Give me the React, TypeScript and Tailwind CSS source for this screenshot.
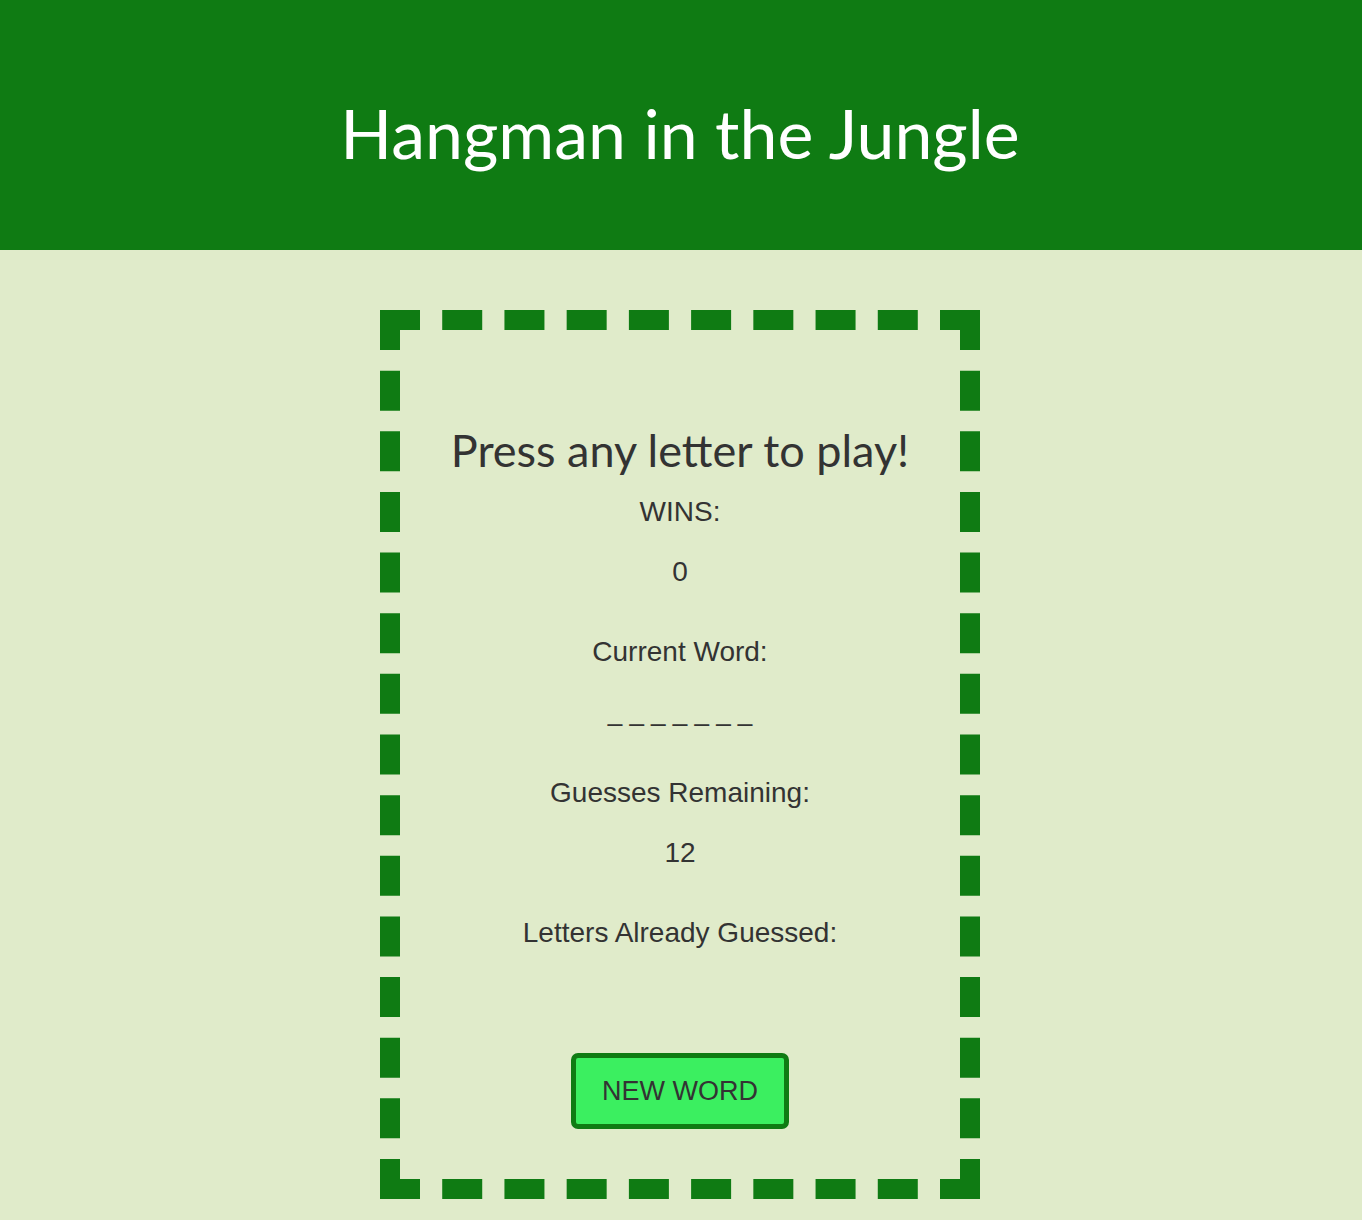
import React from 'react';

export default function App() {
  const wins = 0;
  const guessesLeft = 12;
  const word = '_ _ _ _ _ _ _';

  return (
    <div className="min-h-[1220px] bg-[#e0ebca] pb-[22px] text-[#333333]" style={{ fontFamily: '"Liberation Sans", Arial, sans-serif' }}>
      <header className="flex h-[250px] items-center justify-center bg-[#0f7b13] pt-[16px] pr-[2px]">
        <h1 className="text-[68px] leading-none text-white" style={{ fontFamily: 'Lato, "Open Sans", sans-serif' }}>
          Hangman in the Jungle
        </h1>
      </header>

      <main className="pr-[2px]">
        <div className="mx-auto mt-[60px] flex w-[600px] flex-col items-center border-[20px] border-dashed border-[#0f7b13] pt-[90px] pb-[50px]">
          <h2 className="h-[60px] text-[45px] leading-[60px]" style={{ fontFamily: 'Lato, "Open Sans", sans-serif' }}>
            Press any letter to play!
          </h2>

          <p className="mt-[2px] h-[60px] text-[28px] leading-[60px]">WINS:</p>
          <p className="h-[60px] text-[28px] leading-[60px]">{wins}</p>

          <p className="mt-[20px] h-[60px] text-[28px] leading-[60px]">Current Word:</p>
          <p className="h-[60px] text-[26px] leading-[60px] whitespace-pre">{word}</p>

          <p className="mt-[21px] h-[60px] text-[28px] leading-[60px]">Guesses Remaining:</p>
          <p className="h-[60px] text-[28px] leading-[60px]">{guessesLeft}</p>

          <p className="mt-[20px] h-[60px] text-[28px] leading-[60px]">Letters Already Guessed:</p>

          <button className="mt-[90px] h-[76px] w-[218px] rounded-[7px] border-[5px] border-[#0f7b13] bg-[#3bef60] text-[27px] text-[#333333]">
            NEW WORD
          </button>
        </div>
      </main>
    </div>
  );
}
